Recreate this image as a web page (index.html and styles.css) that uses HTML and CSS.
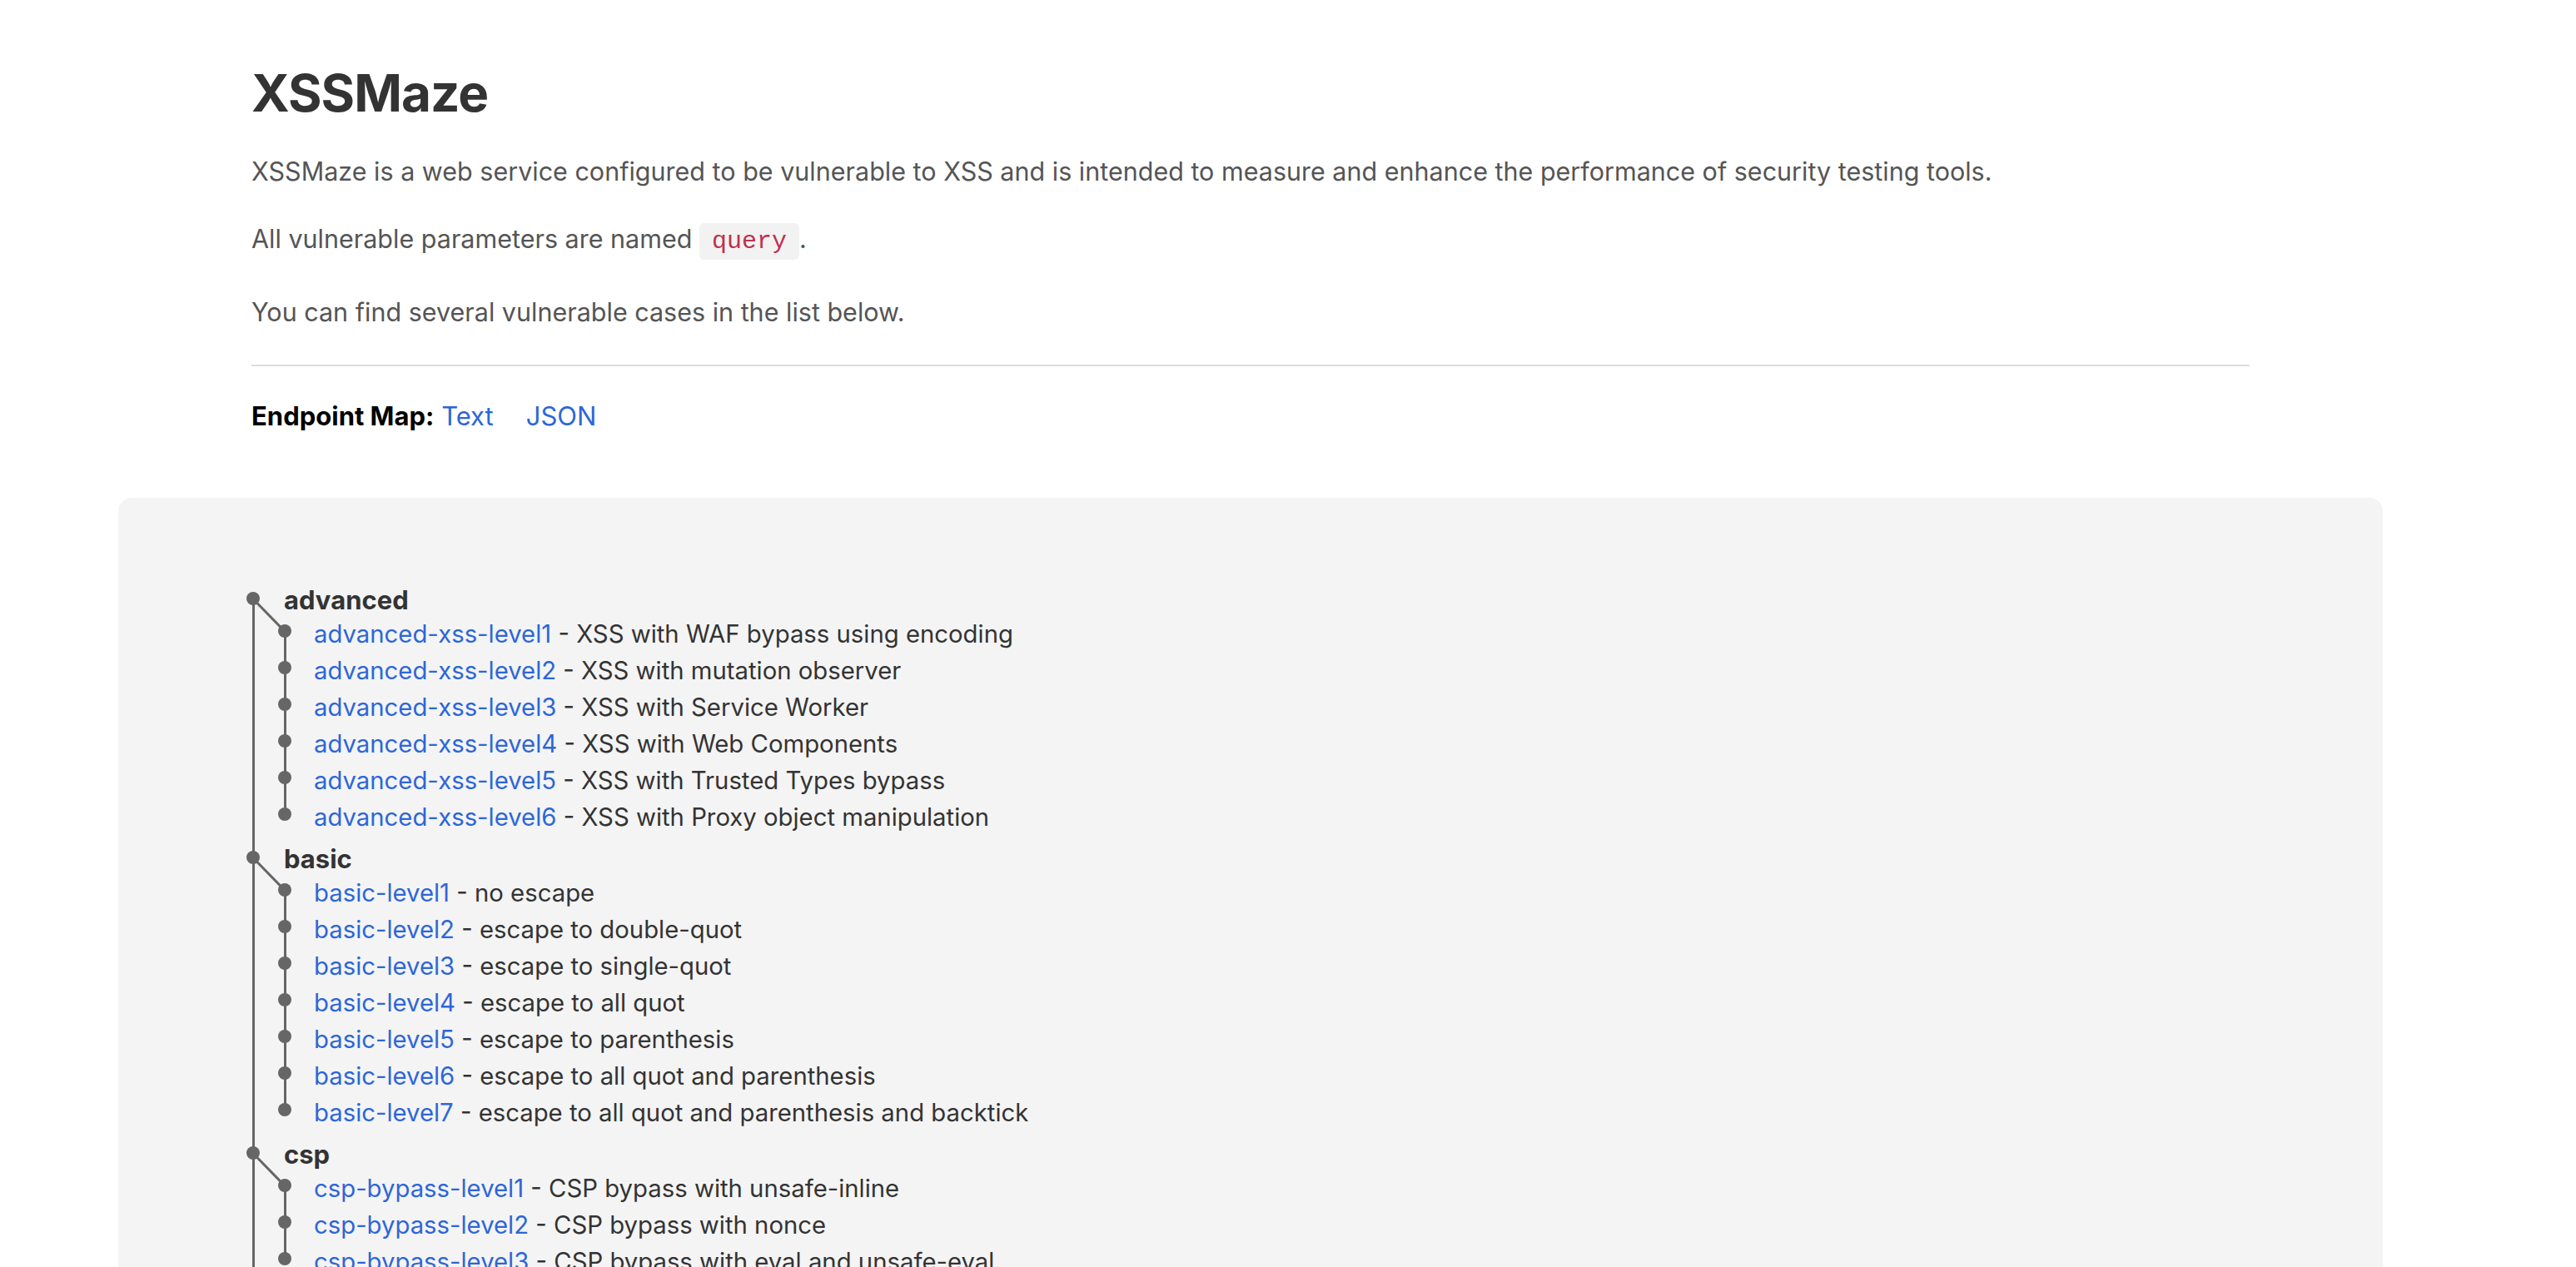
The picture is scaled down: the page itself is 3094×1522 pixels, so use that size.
FILE: index.html
```html
<!DOCTYPE html>
<html lang="en">
<head>
<meta charset="utf-8">
<title>XSSMaze</title>
<link rel="stylesheet" href="styles.css">
</head>
<body>
<div class="page">
  <header class="intro">
    <h1>XSSMaze</h1>
    <p>XSSMaze is a web service configured to be vulnerable to XSS and is intended to measure and enhance the performance of security testing tools.</p>
    <p class="params">All vulnerable parameters are named <code>query</code>.</p>
    <p>You can find several vulnerable cases in the list below.</p>
    <hr>
    <p class="endpoints"><strong>Endpoint Map:</strong> <a href="#" class="fmt">Text</a><a href="#" class="fmt">JSON</a></p>
  </header>
  <section class="map">
    <ul class="tree">
      <li class="cat">
        <span class="cat-name">advanced</span>
        <ul class="leaves">
          <li><a href="#">advanced-xss-level1</a> - XSS with WAF bypass using encoding</li>
          <li><a href="#">advanced-xss-level2</a> - XSS with mutation observer</li>
          <li><a href="#">advanced-xss-level3</a> - XSS with Service Worker</li>
          <li><a href="#">advanced-xss-level4</a> - XSS with Web Components</li>
          <li><a href="#">advanced-xss-level5</a> - XSS with Trusted Types bypass</li>
          <li><a href="#">advanced-xss-level6</a> - XSS with Proxy object manipulation</li>
        </ul>
      </li>
      <li class="cat">
        <span class="cat-name">basic</span>
        <ul class="leaves">
          <li><a href="#">basic-level1</a> - no escape</li>
          <li><a href="#">basic-level2</a> - escape to double-quot</li>
          <li><a href="#">basic-level3</a> - escape to single-quot</li>
          <li><a href="#">basic-level4</a> - escape to all quot</li>
          <li><a href="#">basic-level5</a> - escape to parenthesis</li>
          <li><a href="#">basic-level6</a> - escape to all quot and parenthesis</li>
          <li><a href="#">basic-level7</a> - escape to all quot and parenthesis and backtick</li>
        </ul>
      </li>
      <li class="cat">
        <span class="cat-name">csp</span>
        <ul class="leaves">
          <li><a href="#">csp-bypass-level1</a> - CSP bypass with unsafe-inline</li>
          <li><a href="#">csp-bypass-level2</a> - CSP bypass with nonce</li>
          <li><a href="#">csp-bypass-level3</a> - CSP bypass with eval and unsafe-eval</li>
        </ul>
      </li>
    </ul>
  </section>
</div>
</body>
</html>
```

FILE: styles.css
```css
html, body {
  margin: 0;
  padding: 0;
  background: #ffffff;
}

body {
  font-family: Inter, "Liberation Sans", Arial, sans-serif;
  color: #555555;
}

.page {
  width: 2720px;
  margin-left: 142px;
}

.intro {
  padding: 0 160px;
}

.intro h1 {
  margin: 74px 0 34px;
  font-size: 62px;
  line-height: 76px;
  letter-spacing: -1px;
  font-weight: 700;
  color: #333333;
}

.intro p {
  margin: 0 0 37px;
  font-size: 30.5px;
  line-height: 44px;
}

.intro .params {
  margin-bottom: 41px;
}

.intro code {
  font-family: "Liberation Mono", "Courier New", monospace;
  font-size: 30px;
  color: #c0304f;
  background: #f2f2f2;
  border-radius: 6px;
  padding: 5px 15px;
}

.intro hr {
  margin: 41px 0 38px;
  border: 0;
  height: 2px;
  background: #dddddd;
}

.intro .endpoints {
  color: #000000;
  font-size: 31px;
  margin: 0;
}

.endpoints strong {
  font-weight: 700;
}

a {
  color: #2d66d8;
  text-decoration: none;
}

.fmt + .fmt {
  margin-left: 39px;
}

.map {
  margin-top: 76px;
  background: #f4f4f4;
  border-radius: 16px;
  padding: 104px 154px 200px;
}

.tree,
.leaves {
  list-style: none;
  margin: 0;
  padding: 0;
}

.tree {
  position: relative;
}

/* trunk line running through all category dots */
.tree::before {
  content: "";
  position: absolute;
  left: 6.5px;
  top: 17px;
  bottom: 0;
  width: 3px;
  background: #666666;
}

.cat {
  position: relative;
  padding-left: 45px;
}

.cat + .cat {
  margin-top: 9px;
}

/* category dot */
.cat::before {
  content: "";
  position: absolute;
  left: 0;
  top: 9px;
  width: 16px;
  height: 16px;
  border-radius: 50%;
  background: #666666;
}

/* branch from category dot to first leaf dot */
.cat::after {
  content: "";
  position: absolute;
  left: 8px;
  top: 15.5px;
  width: 54.5px;
  height: 3px;
  background: #666666;
  transform-origin: 0 50%;
  transform: rotate(45.7deg);
}

.cat-name {
  display: block;
  font-size: 31px;
  line-height: 38px;
  font-weight: 700;
  color: #333333;
}

.leaves {
  position: relative;
}

/* stem through leaf dots */
.leaves::before {
  content: "";
  position: absolute;
  left: -0.5px;
  top: 18px;
  bottom: 26px;
  width: 3px;
  background: #666666;
}

.leaves li {
  position: relative;
  padding-left: 36px;
  font-size: 29.3px;
  line-height: 44px;
  color: #333333;
}

.leaves li::before {
  content: "";
  position: absolute;
  left: -7px;
  top: 10px;
  width: 16px;
  height: 16px;
  border-radius: 50%;
  background: #666666;
}
```
